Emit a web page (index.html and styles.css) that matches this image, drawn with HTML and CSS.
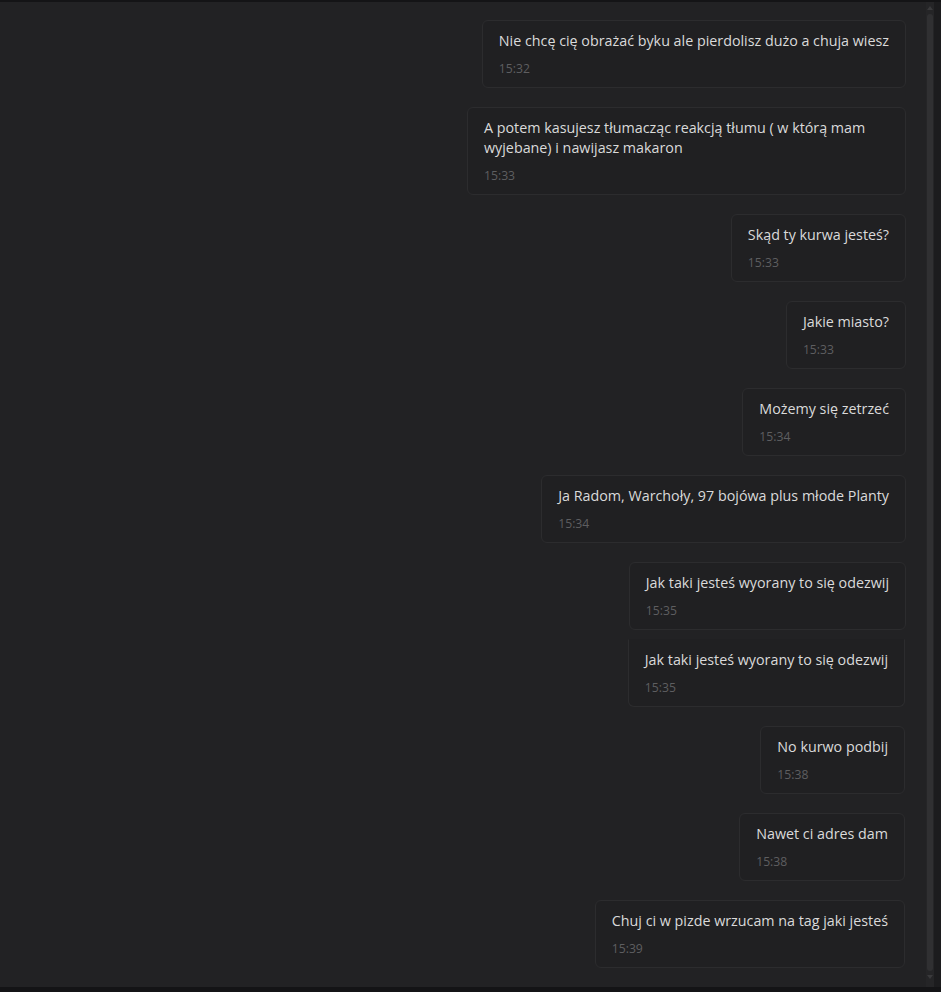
FILE: index.html
```html
<!DOCTYPE html>
<html>
<head>
    <title>Chat</title>
    <link rel="stylesheet" href="styles.css">
</head>
<body>
    <div class="window">
        <div class="chat">
            <div class="message">
                <p class="text">Nie chcę cię obrażać byku ale pierdolisz dużo a chuja wiesz</p>
                <span class="time">15:32</span>
            </div>
            <div class="message">
                <p class="text">A potem kasujesz tłumacząc reakcją tłumu ( w którą mam wyjebane) i nawijasz makaron</p>
                <span class="time">15:33</span>
            </div>
            <div class="message">
                <p class="text">Skąd ty kurwa jesteś?</p>
                <span class="time">15:33</span>
            </div>
            <div class="message">
                <p class="text">Jakie miasto?</p>
                <span class="time">15:33</span>
            </div>
            <div class="message">
                <p class="text">Możemy się zetrzeć</p>
                <span class="time">15:34</span>
            </div>
            <div class="message">
                <p class="text">Ja Radom, Warchoły, 97 bojówa plus młode Planty</p>
                <span class="time">15:34</span>
            </div>
            <div class="message">
                <p class="text">Jak taki jesteś wyorany to się odezwij</p>
                <span class="time">15:35</span>
            </div>
            <!-- second capture starts here -->
            <div class="message cut">
                <p class="text">Jak taki jesteś wyorany to się odezwij</p>
                <span class="time">15:35</span>
            </div>
            <div class="message shifted">
                <p class="text">No kurwo podbij</p>
                <span class="time">15:38</span>
            </div>
            <div class="message shifted">
                <p class="text">Nawet ci adres dam</p>
                <span class="time">15:38</span>
            </div>
            <div class="message shifted">
                <p class="text">Chuj ci w pizde wrzucam na tag jaki jesteś</p>
                <span class="time">15:39</span>
            </div>
        </div>
        <div class="scrollbar">
            <span class="arrow up"></span>
            <div class="thumb"></div>
            <span class="arrow down"></span>
        </div>
        <div class="edge"></div>
    </div>
</body>
</html>
```

FILE: styles.css
```css
body {
    margin: 0;
    background-color: #141416;
    font-family: "Open Sans", "Noto Sans", sans-serif;
}

.window {
    display: flex;
    height: 985px;
    margin-top: 2px;
    background-color: #222224;
}

.chat {
    flex-grow: 1;
    display: flex;
    flex-direction: column;
    align-items: flex-end;
    gap: 19px;
    padding: 18px 20px 0 0;
}

.message {
    max-width: 439px;
    box-sizing: border-box;
    padding: 10px 16px;
    border: 1px solid #2c2c2e;
    border-radius: 6px;
    background-color: #202022;
}

.message.cut {
    margin-top: -10px;
    margin-right: 1px;
    border-top-color: transparent;
    border-radius: 0 0 6px 6px;
}

.message.shifted {
    margin-right: 1px;
}

.text {
    margin: 0 0 10px 0;
    font-size: 14.3px;
    line-height: 20px;
    color: #dadada;
}

.time {
    display: block;
    font-size: 12.2px;
    line-height: 16px;
    color: #5e5e60;
}

.scrollbar {
    width: 8px;
    display: flex;
    flex-direction: column;
    align-items: center;
    background-color: #252527;
    padding: 4px 0 8px;
}

.thumb {
    flex-grow: 1;
    width: 6px;
    margin: 4px 0;
    border-radius: 3px;
    background-color: #303032;
}

.arrow {
    width: 0;
    height: 0;
    border-left: 3px solid transparent;
    border-right: 3px solid transparent;
}

.arrow.up {
    border-bottom: 4px solid #3a3a3c;
}

.arrow.down {
    border-top: 4px solid #3a3a3c;
}

.edge {
    width: 7px;
    background-color: #1c1c1e;
}
```
